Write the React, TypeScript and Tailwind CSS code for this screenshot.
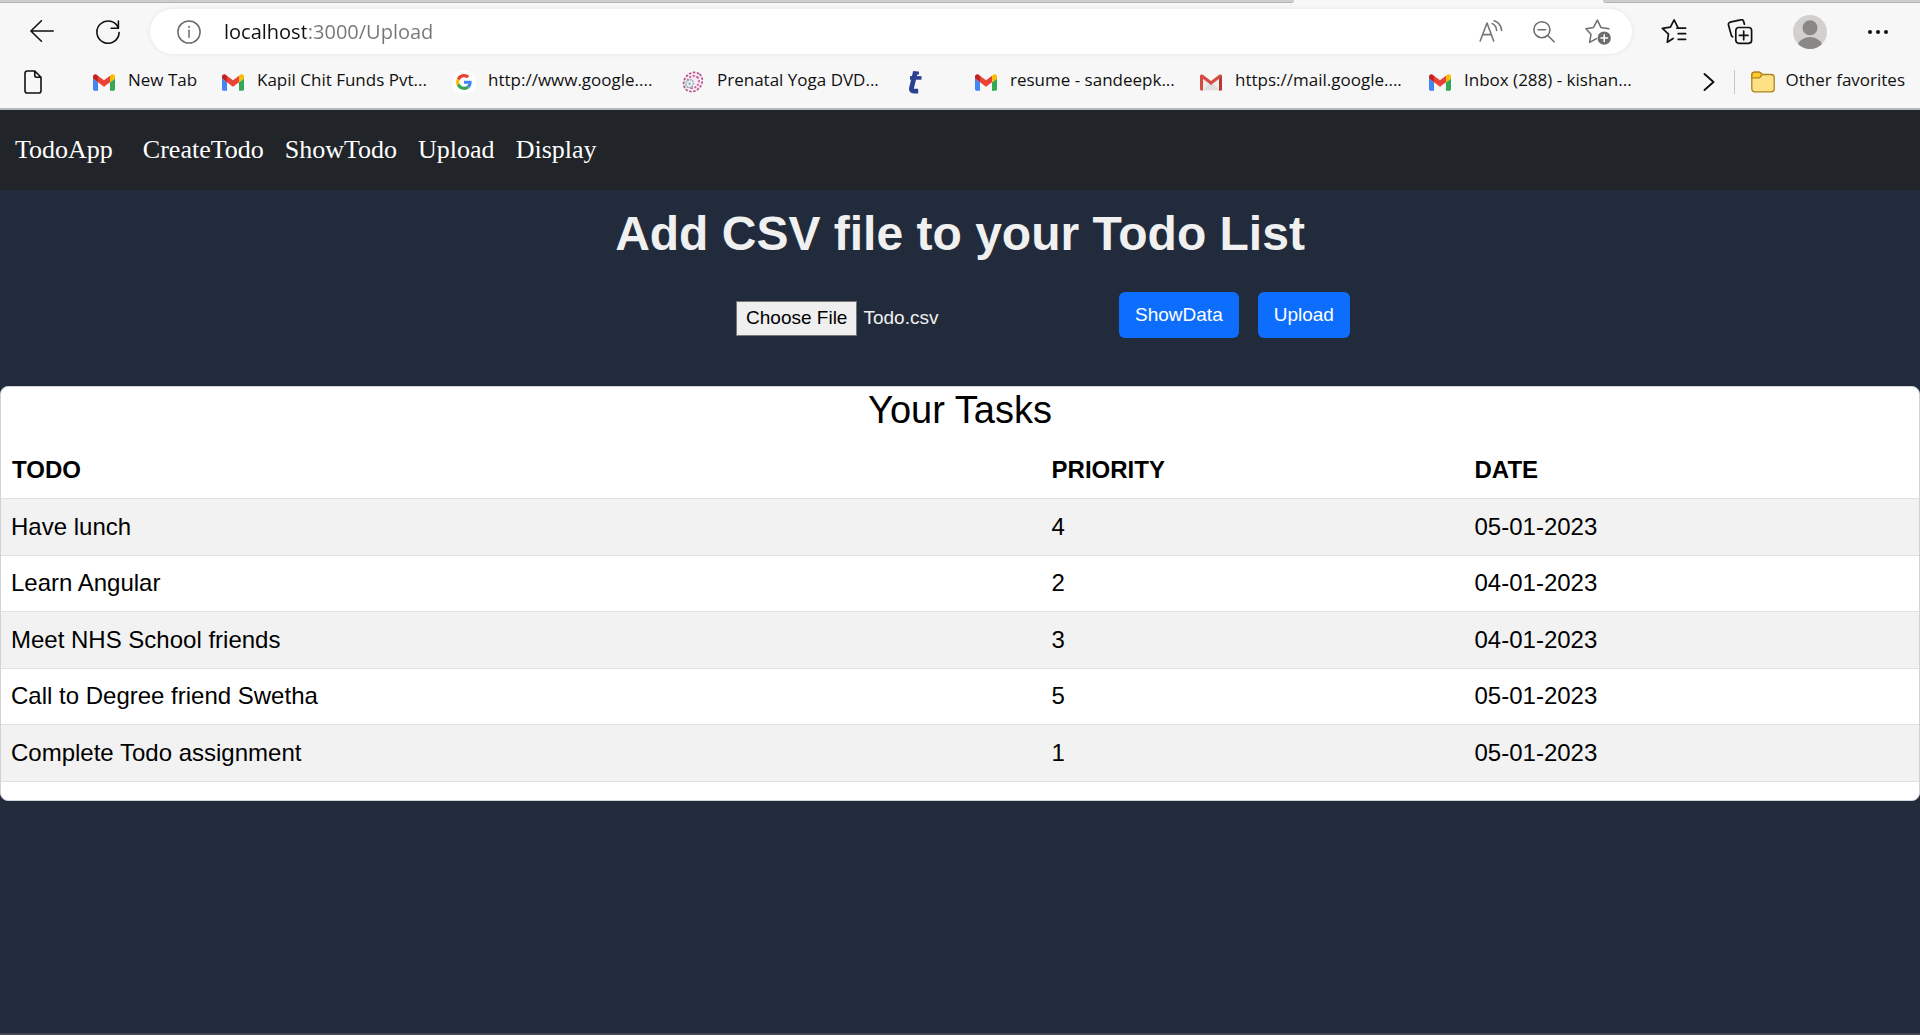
import React, { useEffect, useRef } from "react";

const BackIcon = () => (
  <svg width="24" height="24" viewBox="0 0 24 24" fill="none" stroke="#111" strokeWidth="1.6" strokeLinecap="round" strokeLinejoin="round">
    <path d="M23.2 11H.9M11.4.8.9 11l10.5 10.2" />
  </svg>
);

const ReloadIcon = () => (
  <svg width="24" height="24" viewBox="0 0 24 24" fill="none" stroke="#111" strokeWidth="1.6" strokeLinecap="round" strokeLinejoin="round">
    <path d="M22.4 8.2A11.1 11.1 0 1 0 23.1 12.6M22.4 1v7.2h-7.2" />
  </svg>
);

const InfoIcon = () => (
  <svg width="24" height="24" viewBox="0 0 24 24" fill="none" stroke="#6d6d6d" strokeWidth="1.5" strokeLinecap="round">
    <circle cx="12" cy="12" r="11.1" />
    <path d="M12 10.3v7" />
    <circle cx="12" cy="6.9" r=".6" fill="#6d6d6d" strokeWidth=".8" />
  </svg>
);

const ReadAloudIcon = () => (
  <svg width="24" height="24" viewBox="0 0 24 24" fill="none" stroke="#767676" strokeWidth="1.6" strokeLinecap="round" strokeLinejoin="round">
    <path d="M1.2 21 8 3l6.700 18M3.700 14.600h8.400M13.300 3.600c2.600 1.300 4.200 3.700 4.300 6.900M15.300.8c4.300 1.600 7 5.200 7.300 9.700" />
  </svg>
);

const ZoomOutIcon = () => (
  <svg width="24" height="24" viewBox="0 0 24 24" fill="none" stroke="#6d6d6d" strokeWidth="1.6" strokeLinecap="round">
    <circle cx="9.9" cy="9.700" r="8" />
    <path d="m15.800 15.500 6.300 6.300M6.200 9.700h7.400" />
  </svg>
);

const AddFavoriteIcon = () => (
  <svg width="26" height="26" viewBox="0 0 26 26" fill="none" stroke="#6d6d6d" strokeWidth="1.5" strokeLinecap="round" strokeLinejoin="round">
    <path d="M11.400 19.700 4.600 23.400l1.400-8.100L.9 9.800l7.500-1.200L12.400 1.100l3.600 7.500 7.900 1.200" />
    <circle cx="19.200" cy="19.100" r="6.700" fill="#6d6d6d" stroke="none" />
    <path d="M19.200 15.800v6.600M15.900 19.100h6.600" stroke="#fff" strokeWidth="1.500" />
  </svg>
);

const FavoritesIcon = () => (
  <svg width="26" height="26" viewBox="0 0 26 26" fill="none" stroke="#111" strokeWidth="1.700" strokeLinecap="round" strokeLinejoin="round">
    <path d="M12.100 19.500 6.300 23.200l1.200-8L1.400 9.400l8-1.200L13.100.9l3.600 7.300M15.900 9.100h8.700M17.200 14.700h7.400M17.200 20.300h7.400" />
  </svg>
);

const CollectionsIcon = () => (
  <svg width="26" height="26" viewBox="0 0 26 26" fill="none" stroke="#111" strokeWidth="1.700" strokeLinecap="round" strokeLinejoin="round">
    <rect x="8.800" y="8.500" width="15.800" height="15.800" rx="3" />
    <path d="M16.700 12.100v8.600M12.400 16.400h8.600M17.400 5.200l-.8-2.900A2.300 2.300 0 0 0 13.700.900L3.100 3.200a2.300 2.300 0 0 0-1.600 2.900l2.800 10.200c.2.800.6 1.200 1.300 1.500" />
  </svg>
);

const AvatarIcon = () => (
  <svg width="34" height="34" viewBox="0 0 34 34">
    <clipPath id="avatar-clip">
      <circle cx="17" cy="17" r="17" />
    </clipPath>
    <g clipPath="url(#avatar-clip)">
      <rect width="34" height="34" fill="#d2d0ce" />
      <circle cx="17" cy="12.8" r="7.5" fill="#8a8886" />
      <ellipse cx="17" cy="32" rx="12.5" ry="10" fill="#8a8886" />
    </g>
  </svg>
);

const MoreIcon = () => (
  <svg width="22" height="6" viewBox="0 0 22 6" fill="#111">
    <circle cx="3" cy="3" r="2" />
    <circle cx="11" cy="3" r="2" />
    <circle cx="19" cy="3" r="2" />
  </svg>
);

const PageIcon = () => (
  <svg width="18" height="24" viewBox="0 0 18 24" fill="none" stroke="#111" strokeWidth="1.600" strokeLinejoin="round">
    <path d="M3.3 1h7.5L17 7.3v13.4a2.3 2.3 0 0 1-2.300 2.300H3.300A2.300 2.300 0 0 1 1 20.700V3.300A2.300 2.300 0 0 1 3.300 1ZM10.800 1v4.600c0 1 .7 1.700 1.700 1.700H17" />
  </svg>
);

const GmailIcon = () => (
  <svg width="22" height="17" viewBox="52 42 88 66">
    <path fill="#4285f4" d="M58 108h14V74L52 59v43c0 3.320 2.690 6 6 6" />
    <path fill="#34a853" d="M120 108h14c3.320 0 6-2.690 6-6V59l-20 15" />
    <path fill="#fbbc04" d="M120 48v26l20-15v-8c0-7.420-8.470-11.650-14.400-7.200" />
    <path fill="#ea4335" d="M72 74V48l24 18 24-18v26L96 92" />
    <path fill="#c5221f" d="M52 51v8l20 15V48l-5.600-4.200c-5.940-4.450-14.400-.220-14.400 7.200" />
  </svg>
);

const OldGmailIcon = () => (
  <svg width="22" height="17" viewBox="0 0 22 17">
    <rect x="1" y="1" width="20" height="15.5" rx="1" fill="#ececec" />
    <path d="m3 16 8-8 8 8Z" fill="#dedede" />
    <path d="M3.400 1h15.200L11 7.500Z" fill="#f8f8f8" />
    <path d="M0 2Q0 .5 1.500.5h1L11 7l8.500-6.500h1Q22 .5 22 2v13q0 1.500-1.500 1.500H19V4.800l-8 6.200-8-6.200v11.700H1.500Q0 16.500 0 15Z" fill="#d54b3f" />
    <path d="M19 4.800 22 2v13q0 1.500-1.500 1.500H19Z" fill="#b63a32" />
  </svg>
);

const GoogleIcon = () => (
  <span className="flex size-6 items-center justify-center rounded-full bg-white">
    <svg width="16" height="16" viewBox="0 0 48 48">
      <path fill="#ea4335" d="M24 9.500c3.540 0 6.710 1.220 9.210 3.600l6.850-6.850C35.900 2.380 30.470 0 24 0 14.620 0 6.510 5.380 2.560 13.220l7.980 6.190C12.430 13.720 17.740 9.500 24 9.500z" />
      <path fill="#4285f4" d="M46.980 24.550c0-1.570-.150-3.090-.380-4.550H24v9.020h12.940c-.580 2.960-2.260 5.480-4.780 7.180l7.730 6c4.510-4.180 7.090-10.360 7.090-17.650z" />
      <path fill="#fbbc05" d="M10.530 28.590c-.480-1.450-.760-2.990-.760-4.590s.270-3.140.760-4.590l-7.980-6.190C.920 16.460 0 20.120 0 24c0 3.880.920 7.540 2.560 10.780l7.970-6.190z" />
      <path fill="#34a853" d="M24 48c6.480 0 11.930-2.130 15.890-5.810l-7.730-6c-2.150 1.450-4.920 2.300-8.160 2.300-6.260 0-11.570-4.220-13.470-9.910l-7.980 6.190C6.510 42.620 14.620 48 24 48z" />
    </svg>
  </span>
);

const MandalaIcon = () => (
  <svg width="22" height="22" viewBox="0 0 22 22" fill="none">
    <g transform="rotate(-50 11 11)">
      <ellipse cx="11" cy="11" rx="11" ry="9.5" fill="#f8e8f2" />
      <ellipse cx="11" cy="11" rx="10.200" ry="8.700" stroke="#b0528f" strokeWidth="1.700" strokeDasharray="2.400 1.600" />
      <ellipse cx="11" cy="11" rx="6.500" ry="5.600" stroke="#c9579a" strokeWidth="1.700" strokeDasharray="2 1.600" />
      <ellipse cx="7.600" cy="9.500" rx="4" ry="3.600" fill="#f8e8f2" stroke="#6fb8a8" strokeWidth="1.600" strokeDasharray="1.500 1.100" />
      <circle cx="7.600" cy="9.500" r="1.300" fill="#8bc3b4" />
    </g>
  </svg>
);

const BlueMarkIcon = () => (
  <svg width="16" height="23" viewBox="0 0 16 23" fill="none" stroke="#2b3f93">
    <path d="M8.500.5 4.600 16.800c-.5 2.400.3 3.400 2.300 3.400h4.300" strokeWidth="4.800" />
    <path d="M3 6.900h11.500" strokeWidth="3.600" />
    <path d="M7 2h5" strokeWidth="3" />
  </svg>
);

const ChevronIcon = () => (
  <svg width="12" height="20" viewBox="0 0 12 20" fill="none" stroke="#111" strokeWidth="1.900" strokeLinecap="round" strokeLinejoin="round">
    <path d="m1.500 2 9 8-9 8" />
  </svg>
);

const FolderIcon = () => (
  <svg width="24" height="22" viewBox="0 0 24 22" stroke="#a8851c" strokeWidth="1.300" strokeLinejoin="round">
    <path d="M.8 4.200A3 3 0 0 1 3.800 1.200H8c.8 0 1.200.3 1.700.8l1.500 1.500h9a3 3 0 0 1 3 3v11.300a3 3 0 0 1-3 3H3.800a3 3 0 0 1-3-3Z" fill="#ffe085" />
    <path d="M.8 6.800V4.200A3 3 0 0 1 3.800 1.200H8c.8 0 1.200.3 1.700.8l1.400 1.500-1.700 2.300c-.4.600-.9 1-1.700 1Z" fill="#ffc928" />
  </svg>
);

const bookmarks: { label: string; name: string; icon: () => React.ReactElement; width: string }[] = [
  { label: "New Tab", name: "New Tab", icon: GmailIcon, width: "w-[129px]" },
  { label: "Kapil Chit Funds Pvt...", name: "Kapil Chit Funds", icon: GmailIcon, width: "w-[231px]" },
  { label: "http://www.google....", name: "Google", icon: GoogleIcon, width: "w-[229px]" },
  { label: "Prenatal Yoga DVD...", name: "Prenatal Yoga", icon: MandalaIcon, width: "w-[222px]" },
  { label: "", name: "Bookmark", icon: BlueMarkIcon, width: "w-[71px]" },
  { label: "resume - sandeepk...", name: "resume", icon: GmailIcon, width: "w-[225px]" },
  { label: "https://mail.google....", name: "Mail", icon: OldGmailIcon, width: "w-[229px]" },
  { label: "Inbox (288) - kishan...", name: "Inbox", icon: GmailIcon, width: "w-[229px]" },
];

function BrowserChrome() {
  return (
    <header className="border-b-2 border-[#b4b9bc] bg-[#f7f7f7] font-['Open_Sans','Noto_Sans',sans-serif] text-[#111]">
      <div className="flex h-[3px] justify-between">
        <div className="w-[1294px] rounded-br border-b border-[#b5b5b5] bg-[#cdcdcd]" />
        <div className="w-[317px] rounded-bl border-b border-[#b5b5b5] bg-[#cdcdcd]" />
      </div>
      <div className="flex h-[57px] items-center pr-[31px] pl-[30px]">
        <button aria-label="Back"><BackIcon /></button>
        <button aria-label="Refresh" className="ml-[42px]"><ReloadIcon /></button>
        <div className="ml-[30px] flex h-[45px] flex-1 items-center rounded-full bg-white pr-[21px] pl-[27px] shadow-[0_0_5px_rgba(0,0,0,0.08)]">
          <button aria-label="Site information"><InfoIcon /></button>
          <input
            aria-label="Address"
            defaultValue="localhost:3000/Upload"
            className="ml-[23px] min-w-0 flex-1 bg-[linear-gradient(to_right,#111_82px,#767676_82px)] bg-clip-text text-[20px] text-transparent outline-none"
          />
          <div className="flex items-center gap-[29px]">
            <button aria-label="Read aloud"><ReadAloudIcon /></button>
            <button aria-label="Zoom out"><ZoomOutIcon /></button>
            <button aria-label="Add to favorites"><AddFavoriteIcon /></button>
          </div>
        </div>
        <div className="ml-[29px] flex items-center gap-10">
          <button aria-label="Favorites"><FavoritesIcon /></button>
          <button aria-label="Collections"><CollectionsIcon /></button>
          <button aria-label="Profile"><AvatarIcon /></button>
          <button aria-label="Settings and more"><MoreIcon /></button>
        </div>
      </div>
      <div className="flex h-12 items-center pr-[15px] pb-2 pl-6 text-[17px] whitespace-nowrap">
        <button aria-label="New page" className="mr-[50px] w-[18px] shrink-0 pt-1"><PageIcon /></button>
        <nav className="flex flex-1 overflow-hidden" aria-label="Bookmarks">
          {bookmarks.map(({ label, name, icon: Icon, width }) => (
            <a key={name} href="#" aria-label={label || name} className={`flex h-8 shrink-0 items-center gap-3 ${width}`}>
              <span className="flex w-6 shrink-0 justify-center pt-1">
                <Icon />
              </span>
              {label}
            </a>
          ))}
        </nav>
        <button aria-label="More bookmarks" className="pt-1"><ChevronIcon /></button>
        <span className="mt-1 mr-4 ml-[19px] h-6 w-px bg-[#c8c8c8]" />
        <button className="flex items-center gap-[11px]">
          <span className="pt-1"><FolderIcon /></span>
          Other favorites
        </button>
      </div>
    </header>
  );
}

function NavBar() {
  return (
    <nav className="flex h-20 items-center bg-[#212529] px-[15px] pb-0.5 font-['Liberation_Serif',serif] text-[26px] text-white">
      <a href="#" className="mr-[30px]">TodoApp</a>
      <div className="flex gap-[21px]">
        <a href="#">CreateTodo</a>
        <a href="#">ShowTodo</a>
        <a href="#">Upload</a>
        <a href="#">Display</a>
      </div>
    </nav>
  );
}

function UploadForm() {
  const fileInput = useRef<HTMLInputElement>(null);

  useEffect(() => {
    const transfer = new DataTransfer();
    transfer.items.add(new File(["todo,priority,date"], "Todo.csv", { type: "text/csv" }));
    if (fileInput.current) fileInput.current.files = transfer.files;
  }, []);

  return (
    <form className="flex items-start justify-center pt-7 pb-12 pl-[166px] text-[19px]" onSubmit={(e) => e.preventDefault()}>
      <input
        ref={fileInput}
        type="file"
        accept=".csv"
        aria-label="CSV file"
        className="mt-[9px] w-[383px] text-[#f0f0f0] file:mr-[6px] file:h-[35px] file:border file:border-solid file:border-[#767676] file:bg-[#efefef] file:px-[9px] file:text-black"
      />
      <button type="button" className="h-[46px] rounded-md bg-[#0d6efd] px-4 text-white">ShowData</button>
      <button type="submit" className="ml-[19px] h-[46px] rounded-md bg-[#0d6efd] px-4 text-white">Upload</button>
    </form>
  );
}

const tasks = [
  { todo: "Have lunch", priority: 4, date: "05-01-2023" },
  { todo: "Learn Angular", priority: 2, date: "04-01-2023" },
  { todo: "Meet NHS School friends", priority: 3, date: "04-01-2023" },
  { todo: "Call to Degree friend Swetha", priority: 5, date: "05-01-2023" },
  { todo: "Complete Todo assignment", priority: 1, date: "05-01-2023" },
];

function TaskCard() {
  return (
    <section className="rounded-lg border border-[#cfd2d6] bg-white pb-[18px] text-black">
      <h2 className="h-[55px] text-center text-[38px] leading-[46px]">Your Tasks</h2>
      <table className="w-full table-fixed text-left text-2xl">
        <thead>
          <tr className="h-14 border-b border-[#dee2e6]">
            <th className="w-[54.2%] px-[11px]">TODO</th>
            <th className="w-[22%] px-[11px]">PRIORITY</th>
            <th className="px-[12px]">DATE</th>
          </tr>
        </thead>
        <tbody>
          {tasks.map((task) => (
            <tr key={task.todo} className="h-14 border-b border-[#dee2e6] odd:h-[57px] odd:bg-[#f2f2f2]">
              <td className="px-[10px]">{task.todo}</td>
              <td className="px-[11px]">{task.priority}</td>
              <td className="px-[12px]">{task.date}</td>
            </tr>
          ))}
        </tbody>
      </table>
    </section>
  );
}

export default function App() {
  return (
    <div className="flex min-h-screen flex-col border-b-2 border-[#47484d] bg-[#212b3c] font-['Liberation_Sans',Arial,sans-serif]">
      <BrowserChrome />
      <NavBar />
      <main>
        <h1 className="pt-[14px] text-center text-5xl leading-[60px] font-bold text-[#f0f0f0]">Add CSV file to your Todo List</h1>
        <UploadForm />
        <TaskCard />
      </main>
    </div>
  );
}
